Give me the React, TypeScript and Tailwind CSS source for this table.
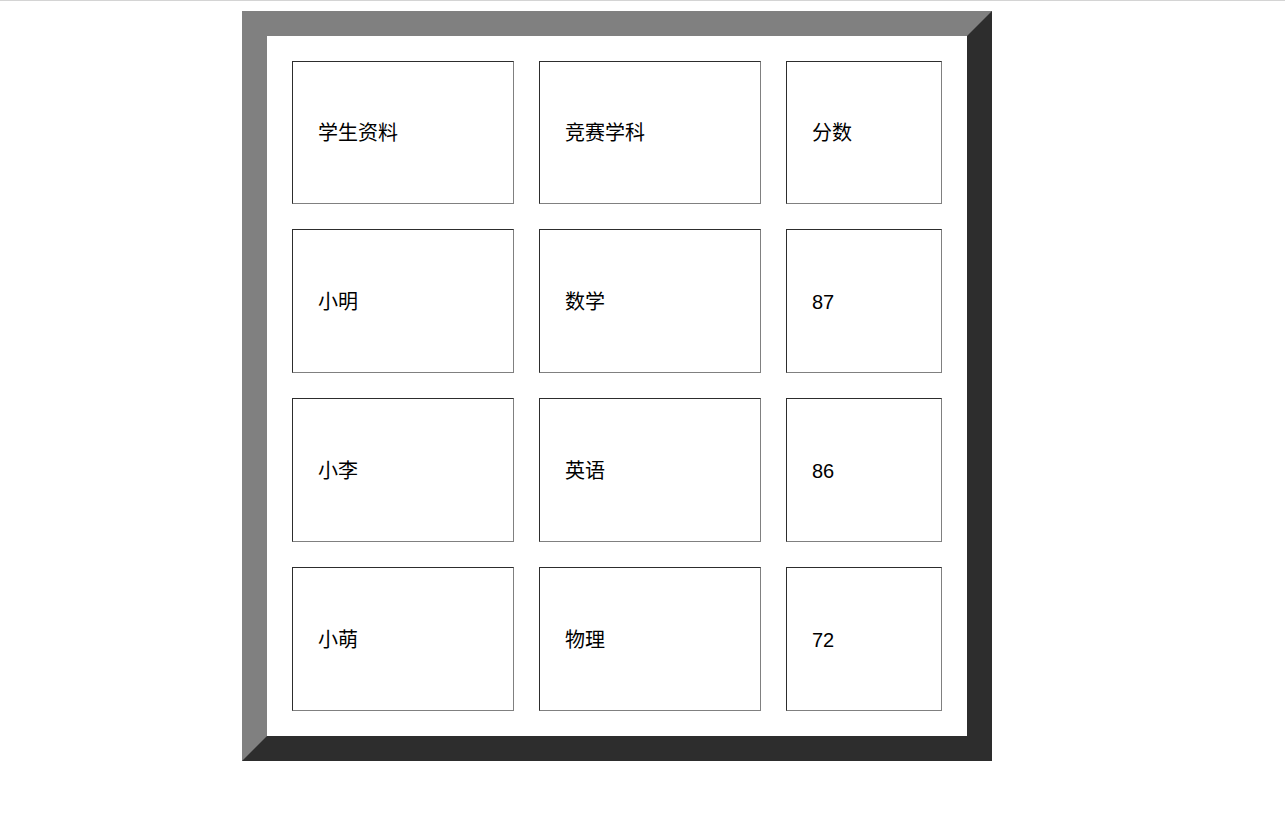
const rows = [
  ['学生资料', '竞赛学科', '分数'],
  ['小明', '数学', '87'],
  ['小李', '英语', '86'],
  ['小萌', '物理', '72'],
]

export default function App() {
  return (
    <div className="min-h-screen bg-white border-t border-[#d4d4d4]" style={{ fontFamily: '"Liberation Sans", "Noto Sans CJK SC", sans-serif' }}>
      <div className="ml-[242px] mt-[10px] w-[750px] h-[750px] border-[25px] border-solid border-t-[#808080] border-l-[#808080] border-r-[#2d2d2d] border-b-[#2d2d2d] bg-white p-[25px] grid grid-cols-[222px_222px_156px] grid-rows-[143px_144px_144px_144px] gap-[25px]">
        {rows.flat().map((cell, i) => (
          <div
            key={i}
            className="flex items-center pl-[25px] pt-[1px] border border-t-[#2d2d2d] border-l-[#2d2d2d] border-r-[#808080] border-b-[#808080] text-[20px] text-black"
          >
            {cell}
          </div>
        ))}
      </div>
    </div>
  )
}
